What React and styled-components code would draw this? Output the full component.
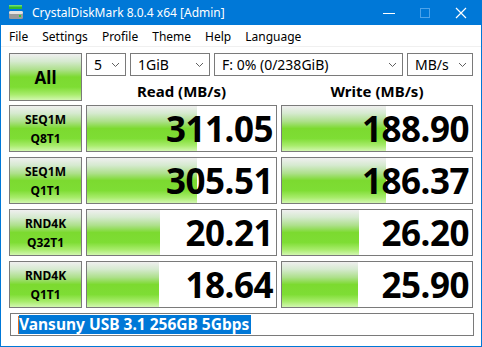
import styled, { createGlobalStyle } from 'styled-components';

const GlobalStyle = createGlobalStyle`
  body {
    margin: 0;
    overflow: hidden;
    background: #ffffff;
  }
`;

const rows = [
  { top: 'SEQ1M', bottom: 'Q8T1', read: '311.05', write: '188.90' },
  { top: 'SEQ1M', bottom: 'Q1T1', read: '305.51', write: '186.37' },
  { top: 'RND4K', bottom: 'Q32T1', read: '20.21', write: '26.20' },
  { top: 'RND4K', bottom: 'Q1T1', read: '18.64', write: '25.90' },
];

// CrystalDiskMark meter is log scale: log10(score * 10) / 6
const meter = (value) => `${(Math.log10(parseFloat(value) * 10) / 6) * 100}%`;

const DriveIcon = () => (
  <svg width="16" height="16" viewBox="0 0 16 16">
    <rect x="1" y="1" width="13" height="4" fill="#2fb82f" />
    <rect x="1" y="1" width="13" height="1.5" fill="#6ee06e" />
    <rect x="1" y="7" width="14" height="8" rx="1.5" fill="#9a9a9a" />
    <rect x="1" y="7" width="14" height="3" rx="1.5" fill="#e4e4e4" />
    <rect x="11" y="11" width="2" height="2" fill="#2fcf2f" />
  </svg>
);

const Chevron = () => (
  <svg width="9" height="6" viewBox="0 0 9 6">
    <polyline points="1,1 4.5,4.5 8,1" fill="none" stroke="#606060" strokeWidth="1" />
  </svg>
);

const Select = ({ width, children }) => (
  <SelectBox $width={width}>
    <span>{children}</span>
    <Chevron />
  </SelectBox>
);

const App = () => (
  <Window>
    <GlobalStyle />
    <TitleBar>
      <TitleLeft>
        <DriveIcon />
        <TitleText>CrystalDiskMark 8.0.4 x64 [Admin]</TitleText>
      </TitleLeft>
      <Controls>
        <ControlButton>
          <svg width="12" height="12" viewBox="0 0 12 12">
            <line x1="0" y1="6.5" x2="12" y2="6.5" stroke="#fff" strokeWidth="1" />
          </svg>
        </ControlButton>
        <ControlButton>
          <svg width="12" height="12" viewBox="0 0 12 12">
            <rect x="1.5" y="1.5" width="9" height="9" fill="none" stroke="#4da3ea" strokeWidth="1" />
          </svg>
        </ControlButton>
        <ControlButton>
          <svg width="12" height="12" viewBox="0 0 12 12">
            <path d="M1 1 L11 11 M11 1 L1 11" stroke="#fff" strokeWidth="1.2" />
          </svg>
        </ControlButton>
      </Controls>
    </TitleBar>
    <MenuBar>
      <MenuItem>File</MenuItem>
      <MenuItem>Settings</MenuItem>
      <MenuItem>Profile</MenuItem>
      <MenuItem>Theme</MenuItem>
      <MenuItem>Help</MenuItem>
      <MenuItem>Language</MenuItem>
    </MenuBar>
    <Body>
      <Grid>
        <AllButton>All</AllButton>
        <Selects>
          <Select width={40}>5</Select>
          <Select width={80}>1GiB</Select>
          <Select width={189}>F: 0% (0/238GiB)</Select>
          <Select width={66}>MB/s</Select>
        </Selects>
        <Header>Read (MB/s)</Header>
        <Header>Write (MB/s)</Header>
        {rows.map((r) => (
          <Row key={r.top + r.bottom}>
            <TestButton>
              <span>{r.top}</span>
              <span>{r.bottom}</span>
            </TestButton>
            <ResultCell>
              <Bar style={{ width: meter(r.read) }} />
              <Score>{r.read}</Score>
            </ResultCell>
            <ResultCell>
              <Bar style={{ width: meter(r.write) }} />
              <Score>{r.write}</Score>
            </ResultCell>
          </Row>
        ))}
      </Grid>
      <Comment>
        <Caret />
        <Selected>Vansuny USB 3.1 256GB 5Gbps</Selected>
      </Comment>
    </Body>
  </Window>
);

const green = `linear-gradient(
  180deg,
  #efefef 0%,
  #d6ead0 16%,
  #aee08c 34%,
  #7cda30 50%,
  #7edd34 72%,
  #a8ec6c 88%,
  #d2f7b0 100%
)`;

const Window = styled.div`
  width: 482px;
  height: 347px;
  box-sizing: border-box;
  border: 1px solid #0078d7;
  border-top: none;
  background: #ffffff;
  font-family: 'Noto Sans', 'Open Sans', sans-serif;
  color: #000;
  overflow: hidden;
`;

const TitleBar = styled.div`
  height: 25px;
  background: #0078d7;
  margin: 0 -1px;
  display: flex;
  align-items: center;
  justify-content: space-between;
`;

const TitleLeft = styled.div`
  display: flex;
  align-items: center;
  gap: 8px;
  padding-left: 8px;
  padding-bottom: 1px;
`;

const TitleText = styled.span`
  color: #ffffff;
  font-size: 12px;
`;

const Controls = styled.div`
  display: flex;
  align-items: center;
  height: 100%;
`;

const ControlButton = styled.div`
  width: 36px;
  height: 100%;
  display: flex;
  align-items: center;
  justify-content: center;
  &:last-child {
    margin-right: 3px;
  }
`;

const MenuBar = styled.div`
  height: 22px;
  display: flex;
  align-items: center;
  padding-left: 1px;
  padding-top: 1px;
  box-sizing: border-box;
  border-bottom: 1px solid #f0f0f0;
`;

const MenuItem = styled.span`
  font-size: 12px;
  padding: 0 7px;
`;

const Body = styled.div`
  padding: 6px 8px 0 8px;
  display: flex;
  flex-direction: column;
  gap: 5px;
`;

const Grid = styled.div`
  display: grid;
  grid-template-columns: 73px 191px 192px;
  grid-template-rows: 23px 25px;
  column-gap: 4px;
  row-gap: 0;
`;

const AllButton = styled.div`
  grid-row: 1 / span 2;
  box-sizing: border-box;
  height: 48px;
  border: 1px solid #7a7a7a;
  background: ${green};
  display: flex;
  align-items: center;
  justify-content: center;
  font-weight: 700;
  font-size: 17px;
`;

const Selects = styled.div`
  grid-column: 2 / span 2;
  display: flex;
  gap: 4px;
`;

const SelectBox = styled.div`
  width: ${(p) => p.$width}px;
  height: 23px;
  box-sizing: border-box;
  border: 1px solid #7a7a7a;
  background: #ffffff;
  display: flex;
  align-items: center;
  justify-content: space-between;
  padding: 0 5px 0 7px;
  font-size: 14px;
  white-space: nowrap;
`;

const Header = styled.div`
  display: flex;
  align-items: center;
  justify-content: center;
  font-weight: 700;
  font-size: 15px;
  padding-top: 4px;
`;

const Row = styled.div`
  grid-column: 1 / span 3;
  display: grid;
  grid-template-columns: 73px 191px 192px;
  column-gap: 4px;
  height: 47px;
  margin-top: 4px;
  & + & {
    margin-top: 5px;
  }
`;

const TestButton = styled.div`
  box-sizing: border-box;
  border: 1px solid #7a7a7a;
  background: ${green};
  display: flex;
  flex-direction: column;
  align-items: center;
  justify-content: center;
  font-weight: 700;
  font-size: 12px;
  line-height: 19px;
`;

const ResultCell = styled.div`
  position: relative;
  box-sizing: border-box;
  border: 1px solid #7a7a7a;
  background: #ffffff;
  display: flex;
  align-items: center;
  justify-content: flex-end;
  padding-right: 3px;
  overflow: hidden;
`;

const Bar = styled.div`
  position: absolute;
  left: 0;
  top: 0;
  bottom: 0;
  background: ${green};
`;

const Score = styled.span`
  position: relative;
  font-weight: 700;
  font-size: 35px;
  letter-spacing: -0.5px;
  line-height: 1;
`;

const Comment = styled.div`
  width: 464px;
  height: 23px;
  box-sizing: border-box;
  border: 1px solid #7a7a7a;
  display: flex;
  align-items: center;
  padding-left: 7px;
  margin-left: 1px;
`;

const Caret = styled.div`
  width: 1px;
  height: 18px;
  background: #e07020;
`;

const Selected = styled.span`
  background: #0078d7;
  color: #ffffff;
  font-weight: 700;
  font-size: 15.5px;
  line-height: 19px;
  padding-right: 2px;
  white-space: nowrap;
`;

export default App;
